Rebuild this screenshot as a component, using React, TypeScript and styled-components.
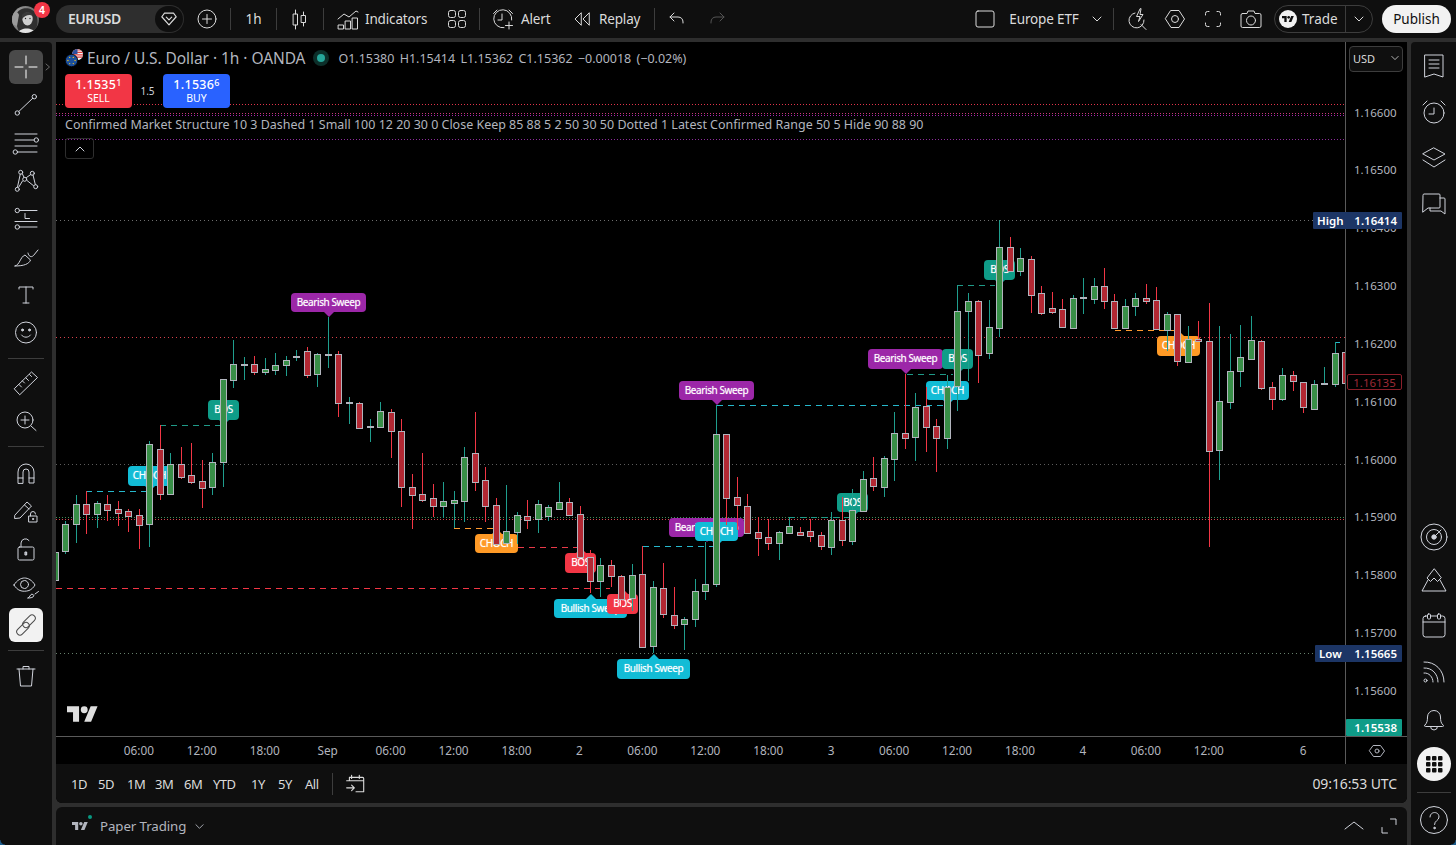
import React from 'react';
import styled, { createGlobalStyle } from 'styled-components';

const UI = '"Noto Sans", "Open Sans", sans-serif';

const Global = createGlobalStyle`
  html, body { margin: 0; padding: 0; background: #2e2e2e; width: 1456px; height: 845px; overflow: hidden; }
  body { font-family: ${UI}; color: #dbdbdb; }
  * { box-sizing: border-box; }
`;

const Page = styled.div`
  width: 1456px; height: 845px; display: flex; flex-direction: column; gap: 4px; background: #2e2e2e; overflow: hidden;
`;

/* ---------- top bar ---------- */
const TopBar = styled.header`
  height: 38px; flex: none; display: flex; align-items: center; background: #0f0f0f;
`;
const Slot = styled.div<{ $w: number; $pl?: number; $gap?: number }>`
  width: ${p => p.$w}px; flex: none; height: 100%; display: flex; align-items: center; justify-content: ${p => (p.$pl !== undefined ? 'flex-start' : 'center')};
  padding-left: ${p => p.$pl ?? 0}px; gap: ${p => p.$gap ?? 8}px;
  font-size: 13.5px; letter-spacing: -0.15px; color: #dbdbdb; white-space: nowrap;
`;
const BarText = styled.span`
  margin-bottom: 1px;
`;
const Dim = styled.span`
  color: #555; display: flex;
`;
const VSep = styled.div`
  width: 1px; height: 22px; background: #3d3d3d; flex: none;
`;
const Spacer = styled.div` flex: 1; `;
const AvatarWrap = styled.div`
  width: 56px; height: 38px; flex: none; position: relative;
  svg { position: absolute; left: 12px; top: 6px; }
`;
const Badge = styled.span`
  position: absolute; left: 34px; top: 2px; width: 16px; height: 16px; border-radius: 50%; background: #f23645; color: #fff;
  font-size: 10.5px; font-weight: 700; display: flex; align-items: center; justify-content: center; font-family: "Liberation Sans", sans-serif;
`;
const SymbolPill = styled.div`
  width: 128px; height: 28px; flex: none; border-radius: 14px; background: #2e2e2e; display: flex; align-items: center;
  justify-content: space-between; padding: 0 1px 0 12px; font-size: 14px; font-weight: 600; color: #dbdbdb; letter-spacing: -0.5px;
`;
const PillIcon = styled.span`
  width: 28px; height: 26px; border-radius: 13px; background: #0f0f0f; display: flex; align-items: center; justify-content: center;
`;
const TradeGroup = styled.div`
  width: 99px; height: 28px; flex: none; border: 1px solid #3d3d3d; border-radius: 14px; display: flex; align-items: center; font-size: 13.5px; color: #dbdbdb;
`;
const TradeMain = styled.div`
  width: 71px; height: 100%; display: flex; align-items: center; gap: 5px; padding-left: 4px; border-right: 1px solid #3d3d3d;
`;
const TradeLogo = styled.span`
  width: 18px; height: 18px; border-radius: 50%; background: #f2f2f2; display: flex; align-items: center; justify-content: center; flex: none;
`;
const TradeChevron = styled.div`
  flex: 1; display: flex; align-items: center; justify-content: center;
`;
const Publish = styled.button`
  width: 69px; height: 28px; flex: none; margin: 0 5px 0 9px; border: 0; padding: 0 0 1px; border-radius: 14px; background: #f2f2f2; color: #0f0f0f;
  font-family: ${UI}; font-size: 13.5px;
`;

/* ---------- workspace ---------- */
const Workspace = styled.div`
  flex: 1; display: flex; gap: 4px; min-height: 0;
`;
const LeftRail = styled.nav`
  width: 52px; flex: none; background: #0f0f0f; padding-top: 8px; border-top-right-radius: 4px; position: relative;
  display: flex; flex-direction: column; align-items: center;
`;
const CornerGlow = styled.span<{ $right?: boolean }>`
  position: absolute; bottom: 0; ${p => (p.$right ? 'right: 0;' : 'left: 0;')} width: 5px; height: 5px;
  background: radial-gradient(circle at ${p => (p.$right ? '0 0' : '100% 0')}, transparent 4px, #1c5c8c 5px);
`;
const ToolBtn = styled.button<{ $kind?: 'hover' | 'active' }>`
  width: 34px; height: 34px; flex: none; margin-bottom: 4px; padding: 0; border: 0; border-radius: 6px; display: flex; align-items: center; justify-content: center; position: relative;
  background: ${p => (p.$kind === 'hover' ? '#4a4a4a' : p.$kind === 'active' ? '#f2f2f2' : 'transparent')};
  color: ${p => (p.$kind === 'hover' ? '#ffffff' : p.$kind === 'active' ? '#4a4a4a' : '#d1d4dc')};
`;
const HoverCaret = styled.span`
  position: absolute; left: 35px; top: 13px; color: #6a6a6a; display: flex;
`;
const RailSep = styled.div<{ $after?: number }>`
  width: 36px; height: 1px; flex: none; background: #3d3d3d; margin: 4px 0 ${p => p.$after ?? 7}px;
`;
const Center = styled.main`
  width: 1351px; flex: none; display: flex; flex-direction: column; gap: 4px;
`;
const ChartPanel = styled.section`
  height: 761px; flex: none; display: flex; flex-direction: column; background: #000; border-radius: 0 0 6px 6px; overflow: hidden;
`;
const ChartRow = styled.div`
  height: 694px; flex: none; display: flex; position: relative;
`;
const Canvas = styled.div`
  width: 1289px; flex: none; position: relative; overflow: hidden; background: #000;
`;
const Layer = styled.svg`
  position: absolute; left: 0; top: 0; display: block;
`;
const Pill = styled.div<{ $x: number; $y: number; $w: number; $h: number; $c: string; $dir: 'up' | 'down' }>`
  position: absolute; left: ${p => p.$x - 56}px; top: ${p => p.$y - 42}px; width: ${p => p.$w}px; height: ${p => p.$h}px; background: ${p => p.$c};
  border-radius: 4px; color: #fff; font-size: 10px; line-height: 1; padding-bottom: 2px; display: flex; align-items: center; justify-content: center; white-space: nowrap; letter-spacing: -0.4px;
  text-shadow: 0 0 1px rgba(255, 255, 255, 0.6);
  &::after {
    content: ''; position: absolute; left: 50%; margin-left: -5px; border-left: 5px solid transparent; border-right: 5px solid transparent;
    ${p => (p.$dir === 'down' ? `top: 100%; border-top: 5px solid ${p.$c};` : `bottom: 100%; border-bottom: 5px solid ${p.$c};`)}
  }
`;
const Legend = styled.div`
  position: absolute; left: 9px; top: 5px; display: flex; flex-direction: column; align-items: flex-start;
`;
const TitleRow = styled.div`
  height: 22px; display: flex; align-items: center; color: #b2b5be; white-space: nowrap;
`;
const SymbolTitle = styled.span`
  font-size: 15.5px; margin-left: 4px; letter-spacing: -0.1px; word-spacing: 0.15px;
`;
const LiveDot = styled.span`
  width: 16px; height: 16px; border-radius: 50%; background: #0c2f2a; margin: 0 9px 0 8px; display: flex; align-items: center; justify-content: center;
  &::after { content: ''; width: 8px; height: 8px; border-radius: 50%; background: #26a69a; }
`;
const Ohlc = styled.span`
  font-size: 12.5px; word-spacing: 2px;
`;
const OrderRow = styled.div`
  margin-top: 5px; display: flex; align-items: center;
`;
const OrderBtn = styled.div<{ $c: string }>`
  width: 67px; height: 34px; border-radius: 4px; background: ${p => p.$c}; color: #fff; display: flex; flex-direction: column; align-items: center; justify-content: center; padding-bottom: 1px;
`;
const OrderPrice = styled.span`
  font-size: 12.5px; line-height: 15px; letter-spacing: 0.3px; font-weight: 500;
  sup { font-size: 9px; line-height: 0; vertical-align: 3px; }
`;
const OrderSide = styled.span`
  font-size: 10.5px; line-height: 13px;
`;
const Spread = styled.span`
  width: 31px; text-align: center; font-size: 10px; color: #d1d4dc;
`;
const IndicatorLine = styled.div`
  margin-top: 7px; height: 18px; display: flex; align-items: center; font-size: 12.47px; color: #b2b5be; white-space: nowrap;
`;
const CollapseBtn = styled.div`
  margin-top: 5px; width: 29px; height: 21px; border: 1px solid #2e2e2e; border-radius: 3px; display: flex; align-items: center; justify-content: center; color: #d1d4dc;
`;
const WaterMark = styled.svg`
  position: absolute; left: 11px; top: 664px; fill: #dedede;
`;
const PriceAxis = styled.div`
  width: 62px; flex: none; border-left: 1px solid #5a5a5a; position: relative; padding: 41.1px 0 0 8px; display: flex; flex-direction: column;
`;
const Tick = styled.div`
  height: 57.85px; flex: none; display: flex; align-items: center; font-size: 11.5px; color: #b2b5be;
`;
const Currency = styled.div`
  position: absolute; left: 3px; top: 4px; width: 54px; height: 26px; border: 1px solid #3d3d3d; border-radius: 4px; background: #0f0f0f; color: #dbdbdb;
  display: flex; align-items: center; justify-content: space-between; padding: 0 3px 2px 3px; font-size: 11px;
`;
const PriceTag = styled.div<{ $left: number; $top: number; $c: string }>`
  position: absolute; left: ${p => p.$left}px; right: 5px; top: ${p => p.$top}px; height: 17px; background: ${p => p.$c}; color: #fff; border-radius: 1px;
  display: flex; align-items: center; justify-content: space-between; padding: 0 5px 1px 4px; font-size: 11.5px; font-weight: 600;
`;
const LastPrice = styled.div`
  position: absolute; left: 1px; top: 332px; width: 55px; height: 16px; border: 1px solid #8a1f2a; border-radius: 2px; color: #9e2a35; background: #000;
  display: flex; align-items: center; justify-content: center; font-size: 11.5px;
`;
const TimeAxis = styled.div`
  height: 28px; flex: none; display: flex; border-top: 1px solid #5a5a5a; background: #000;
`;
const TimeLabels = styled.div`
  width: 1289px; flex: none; display: flex; padding: 0 0 2px 51.4px; align-items: center;
`;
const TimeLabel = styled.span<{ $w?: number }>`
  width: ${p => p.$w ?? 62.95}px; flex: none; text-align: center; font-size: 11.8px; color: #b2b5be;
`;
const AxisCorner = styled.div`
  flex: 1; border-left: 1px solid #5a5a5a; display: flex; align-items: center; justify-content: center; color: #b2b5be;
`;
const RangeBar = styled.div`
  flex: 1; background: #0f0f0f; display: flex; align-items: center; padding: 0 10px 0 15px; font-size: 13px; color: #dbdbdb;
`;
const RangeBtn = styled.span<{ $w: number }>`
  width: ${p => p.$w}px; flex: none; letter-spacing: -0.5px;
`;
const RangeSep = styled.div`
  width: 1px; height: 22px; background: #3d3d3d; margin: 0 12px 0 0;
`;
const Clock = styled.span`
  margin-left: auto; font-size: 14px; letter-spacing: -0.1px;
`;
const BottomPanel = styled.section`
  flex: 1; background: #0f0f0f; border-radius: 6px 6px 0 0; display: flex; align-items: center; padding-left: 16px; font-size: 13.3px; color: #b2b5be;
`;
const PaperLogo = styled.span`
  position: relative; display: flex; width: 28px; margin-right: 0;
  svg { fill: #b2b5be; }
  &::after { content: ''; position: absolute; left: 16px; top: -7px; width: 4px; height: 4px; border-radius: 50%; background: #089981; }
`;
const PaperName = styled.span` margin-right: 9px; letter-spacing: -0.1px; `;
const PanelTools = styled.div`
  margin-left: auto; display: flex; align-items: center; gap: 17px; padding-right: 10px; color: #d1d4dc;
`;
const RightRail = styled.aside`
  width: 45px; flex: none; background: #0f0f0f; display: flex; flex-direction: column; align-items: center; padding: 1px 0 2px; position: relative; border-top-left-radius: 4px;
`;
const RailBtn = styled.div<{ $mb?: number }>`
  width: 45px; height: 46px; flex: none; display: flex; align-items: center; justify-content: center; color: #d1d4dc; margin-bottom: ${p => p.$mb ?? 0}px;
`;
const RailGap = styled.div` flex: 1; `;
const AppsBtn = styled.div`
  width: 34px; height: 34px; border-radius: 50%; background: #f2f2f2; display: flex; align-items: center; justify-content: center;
`;
const RailLine = styled.div`
  width: 34px; height: 1px; flex: none; background: #3d3d3d; margin: 5px 0 4px;
`;

/* ---------- icons ---------- */
const Glyph = styled.svg`
  display: block; flex: none; fill: none; stroke: currentColor; stroke-width: 1; stroke-linecap: round; stroke-linejoin: round;
`;
const Ico = ({ s = 28, box = 28, children }: { s?: number; box?: number; children: React.ReactNode }) => (
  <Glyph width={s} height={s} viewBox={`0 0 ${box} ${box}`}>{children}</Glyph>
);
const TvMark = ({ w, fill }: { w: number; fill?: string }) => (
  <svg width={w} height={(w * 18) / 36} viewBox="0 4 36 18" fill={fill} style={{ display: 'block', flex: 'none' }}>
    <path d="M14 22H7V11H0V4h14v18zM28 22h-8l7.5-18h8L28 22z" />
    <circle cx="20" cy="8" r="4" />
  </svg>
);
const Chevron = ({ s = 10, up }: { s?: number; up?: boolean }) => (
  <Ico s={s} box={10}><path d={up ? 'M1 7l4-4 4 4' : 'M1 3l4 4 4-4'} /></Ico>
);

const Avatar = () => (
  <svg width="27" height="27" viewBox="0 0 27 27">
    <defs>
      <clipPath id="av"><circle cx="13.5" cy="13.5" r="13.5" /></clipPath>
      <radialGradient id="avbg" cx="0.3" cy="0.4" r="0.8"><stop offset="0" stopColor="#b5b5b5" /><stop offset="1" stopColor="#555" /></radialGradient>
    </defs>
    <g clipPath="url(#av)">
      <rect width="27" height="27" fill="url(#avbg)" />
      <path d="M5 7 C8 1 20 0 24 8 C27 15 25 24 21 27 H8 C5 23 3 14 5 7Z" fill="#2f2f2f" />
      <ellipse cx="15.500" cy="13" rx="5.200" ry="6.500" fill="#cfcfcf" />
      <path d="M10 9 C13 5 19 5 21 10 C18 8 13 9 10 13Z" fill="#3a3a3a" />
      <path d="M6 27 C8 21 21 21 24 27Z" fill="#e2e2e2" />
      <path d="M0 9 C3 5 6 6 7 9 L5 20 L0 18Z" fill="#9c9c9c" />
      <circle cx="13.500" cy="12.500" r="0.700" fill="#222" /><circle cx="18" cy="12.500" r="0.700" fill="#222" />
    </g>
  </svg>
);
const Flags = () => (
  <svg width="18" height="18" viewBox="0 0 18 18">
    <defs><clipPath id="us"><circle cx="12.5" cy="5.5" r="5.5" /></clipPath></defs>
    <g clipPath="url(#us)">
      <rect x="7" width="11" height="11" fill="#f5f5f5" />
      <path d="M7 1h11M7 3.4h11M7 5.8h11M7 8.2h11" stroke="#e03c3c" strokeWidth="1.2" />
      <rect x="7" y="0" width="5.5" height="5" fill="#2c4f9e" />
    </g>
    <circle cx="6.5" cy="11.5" r="6.2" fill="#1b4f9c" stroke="#000" strokeWidth="0.8" />
    {[0, 60, 120, 180, 240, 300].map(a => (
      <circle key={a} cx={6.5 + 3.6 * Math.cos((a * Math.PI) / 180)} cy={11.5 + 3.6 * Math.sin((a * Math.PI) / 180)} r="0.7" fill="#f5c518" />
    ))}
  </svg>
);

/* ---------- data ---------- */
type C = [number, number, number, number, number];
const candles: C[] = [
  [550,552,580,590,1],[521,524,551,554,1],[495,504,524,543,1],[491,504,514,534,0],[501,503,514,528,1],[495,504,510,521,0],[501,509,513,526,0],[509,511,516,532,0],
  [509,515,525,549,0],[441,444,524,547,1],[425,449,494,500,0],[453,464,494,494,1],[447,464,477,479,0],[443,475,482,484,0],[460,481,488,508,0],[453,462,487,495,1],
  [379,379,462,487,1],[340,364,380,388,1],[357,364,365,380,1],[356,364,372,375,0],[358,369,372,375,1],[353,365,370,375,1],[356,360,365,376,1],[350,356,357,361,1],
  [347,351,375,378,0],[353,354,374,387,1],[317,354,354,368,1],[351,354,403,417,0],[397,402,402,424,1],[402,403,428,428,0],[419,426,426,442,1],[402,411,427,427,1],
  [409,412,431,458,0],[419,431,487,507,0],[474,487,495,529,0],[453,494,500,502,0],[484,498,506,517,0],[482,501,506,518,1],[491,500,503,528,1],[447,457,501,522,1],
  [412,453,482,491,0],[467,480,506,522,0],[498,505,544,544,0],[485,531,543,544,1],[512,515,532,544,1],[500,516,520,529,0],[500,504,519,533,1],[505,507,516,521,1],
  [482,502,509,509,1],[498,502,515,515,0],[506,514,557,557,0],[550,557,581,593,0],[558,565,581,597,1],[560,565,576,587,0],[575,576,599,610,0],[564,575,598,611,1],
  [546,574,647,647,0],[581,587,646,653,1],[563,588,614,618,0],[587,615,625,629,0],[617,619,624,650,1],[579,591,619,627,1],[542,584,591,600,1],[405,434,584,587,1],
  [434,434,498,525,0],[477,497,505,530,0],[494,506,533,533,0],[517,532,538,556,0],[519,537,543,550,0],[531,532,543,560,1],[517,526,533,534,1],[527,532,535,535,0],
  [519,531,536,542,0],[532,535,546,550,0],[512,520,547,555,1],[497,520,540,546,0],[489,510,541,545,1],[471,479,511,511,1],[457,478,486,491,0],[456,458,487,497,1],
  [412,433,459,481,1],[374,433,438,449,0],[393,407,437,461,1],[387,406,427,452,0],[419,426,438,472,0],[375,387,438,449,1],[285,311,386,411,1],[293,301,311,381,1],
  [300,301,355,383,0],[300,327,353,359,1],[220,247,328,337,1],[237,247,271,271,0],[248,258,271,276,1],[256,259,295,313,0],[286,293,313,315,0],[292,308,312,314,0],
  [299,309,327,327,0],[295,298,328,328,1],[278,297,297,314,1],[278,286,299,304,1],[268,286,301,309,0],[294,301,328,328,0],[299,306,328,328,1],[293,298,306,316,1],
  [284,298,301,304,0],[287,300,329,329,0],[312,314,330,351,1],[314,314,361,366,0],[326,339,362,363,1],[321,339,341,342,0],[303,341,451,547,0],[326,401,450,480,1],
  [334,371,402,409,1],[325,357,371,387,1],[316,340,359,359,1],[340,341,388,390,0],[382,387,399,410,0],[368,375,399,401,1],[371,375,381,391,0],[382,382,407,413,0],
  [380,384,409,409,1],[367,383,384,385,1],[342,353,384,387,1],[345,352,383,384,0],
];

type Dot = [number, string, string];
const dotted: Dot[] = [
  [104.5, '#e0344a', '1 2'], [113.5, '#c83a7a', '1 2'], [115.5, '#a22ab0', '1 2'], [139.5, '#8e2a9c', '1 2'],
  [220.5, '#6f6f6f', '1 3'], [337.5, '#d8414c', '1 3'], [464.5, '#5c5c5c', '1 3'], [517.5, '#3e8f58', '1 2'], [519.5, '#d8414c', '1 2'], [653.5, '#66806c', '1 3'],
];
type Dash = [number, number, number, string];
const dashed: Dash[] = [
  [86, 147, 491.5, '#26b8cc'], [160, 221, 425.5, '#1f9a88'], [454, 493, 528.5, '#ff9a2e'], [518, 577, 547.5, '#e83a49'], [56, 610, 588.5, '#f23645'],
  [643, 713, 546.5, '#26b8cc'], [717, 943, 405.5, '#26b8cc'], [907, 953, 374.5, '#1f9a88'], [957, 995, 285.5, '#1f9a88'], [789, 850, 517.5, '#1f9a88'],
  [1115, 1175, 330.5, '#ff9a2e'], [1335, 1340, 342.5, '#26b8cc'],
];
const PURPLE = '#9c27a8', TEAL = '#0f9c88', CYAN = '#12bcd6', ORANGE = '#ff9a26', RED = '#f23645';
type Lbl = [string, number, number, number, number, string, 'up' | 'down'];
const labels: Lbl[] = [
  ['Bearish Sweep', 291, 293, 75, 19, PURPLE, 'down'],
  ['BOS', 208, 400, 31, 20, TEAL, 'down'],
  ['CHOCH', 128, 466, 43, 20, CYAN, 'down'],
  ['Bearish Sweep', 679, 381, 75, 19, PURPLE, 'down'],
  ['CHOCH', 475, 534, 43, 19, ORANGE, 'up'],
  ['BOS', 565, 553, 31, 20, RED, 'up'],
  ['Bullish Sweep', 554, 599, 73, 19, CYAN, 'up'],
  ['BOS', 607, 594, 31, 20, RED, 'up'],
  ['Bullish Sweep', 617, 659, 73, 20, CYAN, 'up'],
  ['Bearish Sweep', 669, 518, 75, 19, PURPLE, 'down'],
  ['CHOCH', 695, 522, 43, 19, CYAN, 'down'],
  ['Bearish Sweep', 868, 349, 75, 20, PURPLE, 'down'],
  ['BOS', 942, 349, 31, 20, TEAL, 'down'],
  ['CHOCH', 926, 381, 43, 19, CYAN, 'down'],
  ['BOS', 984, 260, 31, 20, TEAL, 'down'],
  ['BOS', 837, 493, 31, 19, TEAL, 'down'],
  ['CHOCH', 1157, 336, 43, 20, ORANGE, 'up'],
];
const ticks = ['1.16600','1.16500','1.16400','1.16300','1.16200','1.16100','1.16000','1.15900','1.15800','1.15700','1.15600'];
const times = ['06:00','12:00','18:00','Sep','06:00','12:00','18:00','2','06:00','12:00','18:00','3','06:00','12:00','18:00','4','06:00','12:00'];
const ranges: [string, number][] = [['1D',27],['5D',29],['1M',28],['3M',29],['6M',29],['YTD',38],['1Y',27],['5Y',27],['All',27]];

const CandleX = (i: number) => Math.round(55 + 10.49 * i) + 0.5;

const ChartGrid = () => (
  <Layer width={1289} height={694} viewBox="56 42 1289 694" shapeRendering="crispEdges">
    {dotted.map(([y, c, d]) => <line key={y} x1={56} x2={1345} y1={y} y2={y} stroke={c} strokeDasharray={d} />)}
    {dashed.map(([a, b, y, c]) => <line key={a + '-' + y} x1={a} x2={b} y1={y} y2={y} stroke={c} strokeDasharray="6 5" />)}
  </Layer>
);
const Candles = () => (
  <Layer width={1289} height={694} viewBox="56 42 1289 694" shapeRendering="crispEdges">
    {candles.map(([wt, bt, bb, wb, up], i) => {
      const x = CandleX(i);
      return (
        <g key={i}>
          <line x1={x} x2={x} y1={wt} y2={wb} stroke={up ? '#1f9e8e' : '#f23645'} />
          <rect x={x - 3} y={bt + 0.5} width={6} height={Math.max(bb - bt, 1)} fill={up ? '#388e47' : '#b22833'} stroke="#b2b5be" />
        </g>
      );
    })}
  </Layer>
);

const App = () => (
  <Page>
    <Global />
    <TopBar>
      <AvatarWrap><Avatar /><Badge>4</Badge></AvatarWrap>
      <SymbolPill>
        <BarText>EURUSD</BarText>
        <PillIcon>
          <Ico s={18} box={20}><path d="M5 3.5h10l3 4-8 9-8-9z" strokeWidth="1.3" /><path d="M7 8l3 3 3-3" strokeWidth="1.3" /></Ico>
        </PillIcon>
      </SymbolPill>
      <Slot $w={46}><Ico s={20} box={20}><circle cx="10" cy="10" r="9" /><path d="M10 5.5v9M5.5 10h9" /></Ico></Slot>
      <VSep />
      <Slot $w={45}><BarText>1h</BarText></Slot>
      <VSep />
      <Slot $w={46}><Ico><rect x="7.5" y="9" width="4" height="11" /><path d="M9.5 5v4M9.5 20v4" /><rect x="15.5" y="10.5" width="4" height="7" /><path d="M17.5 7v3.5M17.5 17.5V21" /></Ico></Slot>
      <VSep />
      <Slot $w={111} $pl={10} $gap={3}>
        <Ico><path d="M4 14l6-5 5 3 7-6 2 1" /><rect x="4.5" y="20" width="5" height="4" /><rect x="11.5" y="16" width="5" height="8" /><rect x="18.5" y="13" width="5" height="11" /></Ico>
        <BarText>Indicators</BarText>
      </Slot>
      <Slot $w={44}><Ico s={20} box={20}><rect x="1.5" y="1.5" width="7" height="7" rx="2" /><rect x="11.5" y="1.5" width="7" height="7" rx="2" /><rect x="1.5" y="11.5" width="7" height="7" rx="2" /><rect x="11.5" y="11.5" width="7" height="7" rx="2" /></Ico></Slot>
      <VSep />
      <Slot $w={83} $pl={11} $gap={6}>
        <Ico s={24} box={24}><path d="M13 20.7A9 9 0 1 1 20.7 13" /><path d="M11 7v6H7" /><path d="M18 15v7M14.5 18.5h7" /><path d="M2.5 6.5L6 3M21.5 6.5L18 3" /></Ico>
        <BarText>Alert</BarText>
      </Slot>
      <Slot $w={91} $pl={9} $gap={7}>
        <Ico s={20} box={20}><path d="M9 4L3 10l6 6zM17 4l-6 6 6 6z" /></Ico>
        <BarText>Replay</BarText>
      </Slot>
      <VSep />
      <Slot $w={44}><Ico s={18} box={18}><path d="M6 3L2 7l4 4M2 7h8c3 0 5 2 5 5v1" /></Ico></Slot>
      <Slot $w={36}><Dim><Ico s={18} box={18}><path d="M12 3l4 4-4 4M16 7H8c-3 0-5 2-5 5v1" /></Ico></Dim></Slot>
      <Spacer />
      <Slot $w={21}><Ico s={20} box={20}><rect x="1" y="2" width="18" height="16" rx="2" /></Ico></Slot>
      <Slot $w={5} />
      <Slot $w={88}><BarText>Europe ETF</BarText></Slot>
      <Slot $w={18}><Chevron /></Slot>
      <Slot $w={7} />
      <VSep />
      <Slot $w={9} />
      <Slot $w={28}><Ico s={22} box={22}><path d="M9 5a7.5 7.5 0 1 0 9 7" /><path d="M15 16.5l5 5" /><path d="M14 1L10.5 8.5H14l-1.5 5L17 6.5h-3l1-5.5z" /></Ico></Slot>
      <Slot $w={48}><Ico s={22} box={22}><path d="M7 2.5h8l5.5 8.5L15 19.5H7L1.500 11z" /><circle cx="11" cy="11" r="3.5" /></Ico></Slot>
      <Slot $w={28}><Ico s={18} box={18}><path d="M5 1.500H3.500a2 2 0 0 0-2 2V5M13 1.500h1.500a2 2 0 0 1 2 2V5M1.500 13v1.500a2 2 0 0 0 2 2H5M16.500 13v1.500a2 2 0 0 1-2 2H13" /></Ico></Slot>
      <Slot $w={47}><Ico s={22} box={22}><path d="M2.500 5.500H7l1-2.500h6l1 2.500h4.500a1.500 1.500 0 0 1 1.500 1.500v11a1.500 1.500 0 0 1-1.500 1.500h-17A1.500 1.500 0 0 1 1 18V7a1.500 1.500 0 0 1 1.500-1.500z" /><circle cx="11" cy="12.500" r="4.500" /></Ico></Slot>
      <TradeGroup>
        <TradeMain>
          <TradeLogo><TvMark w={12} fill="#0f0f0f" /></TradeLogo>
          <BarText>Trade</BarText>
        </TradeMain>
        <TradeChevron><Chevron /></TradeChevron>
      </TradeGroup>
      <Publish>Publish</Publish>
    </TopBar>

    <Workspace>
      <LeftRail>
        <CornerGlow />
        <ToolBtn $kind="hover">
          <Ico><path d="M14 3v8M14 17v8M3 14h8M17 14h8" /></Ico>
          <HoverCaret><Ico s={8} box={8}><path d="M2 1l3.500 3L2 7" /></Ico></HoverCaret>
        </ToolBtn>
        <ToolBtn><Ico><path d="M6.800 20.500L20.800 7.200" /><circle cx="5.300" cy="22" r="2.200" /><circle cx="22.300" cy="5.700" r="2.200" /></Ico></ToolBtn>
        <ToolBtn><Ico><path d="M3 5h22M3 11h19M3 17h22M5.500 23H25" /><circle cx="24.300" cy="11" r="2.200" /><circle cx="3.300" cy="23" r="2.200" /></Ico></ToolBtn>
        <ToolBtn><Ico><path d="M5.500 20l2.800-13M10.300 6.700l1.800 3.800M14.500 10.500l4.300-3M21 8l2.300 9.500M21.500 18.700L15 13.500M10.500 14l-3.800 6.200" /><circle cx="8.700" cy="5.300" r="2" /><circle cx="20.300" cy="6.300" r="2" /><circle cx="5.300" cy="22.300" r="2" /><circle cx="12.700" cy="12.300" r="2" /><circle cx="23.700" cy="19.700" r="2" /></Ico></ToolBtn>
        <ToolBtn><Ico><path d="M7.500 5.500H25M3 16.500h22M7.500 22H25M13 8.500v5h4.500" /><circle cx="5.300" cy="5.500" r="2.200" /><circle cx="5.300" cy="22" r="2.200" /></Ico></ToolBtn>
        <ToolBtn><Ico><path d="M3 23C8 22 8 14 13 12l5.500 5C17 21 12 23 3 23z" /><path d="M16 10c.5 3 3 5 5.500 2.500L26 7" /></Ico></ToolBtn>
        <ToolBtn><Ico><path d="M14 6v16M11 22h6M7 8V6h14v2" /></Ico></ToolBtn>
        <ToolBtn><Ico><circle cx="14" cy="13.500" r="10.500" /><circle cx="10.500" cy="11" r="1" fill="currentColor" /><circle cx="17.500" cy="11" r="1" fill="currentColor" /><path d="M9.500 16c2 3 7 3 9 0" /></Ico></ToolBtn>
        <RailSep />
        <ToolBtn><Ico><path d="M2.500 19.500L19.500 3l6 5.500L8 25.500z" /><path d="M7 15.500l2.500 2.500M10.500 12l2 2M14 9l2.500 2.500M17.500 5.500l2 2" /></Ico></ToolBtn>
        <ToolBtn><Ico><circle cx="13" cy="13" r="8" /><path d="M19 19l5 4.500M13 9v8M9 13h8" /></Ico></ToolBtn>
        <RailSep $after={9} />
        <ToolBtn><Ico><path d="M6 24V13a8 8 0 0 1 16 0v11h-5V13a3 3 0 0 0-6 0v11z" /><path d="M6 19h5M17 19h5" /></Ico></ToolBtn>
        <ToolBtn><Ico><path d="M3 18L15 5l4.500 4L8 21l-5 .5z" /><path d="M12.500 8l4.500 4" /><rect x="17" y="19" width="8" height="6" /><path d="M18.500 19v-2a2.500 2.500 0 0 1 5 0" /><circle cx="21" cy="22" r=".6" fill="currentColor" /></Ico></ToolBtn>
        <ToolBtn><Ico><rect x="6" y="12" width="16" height="13" rx="1.500" /><path d="M9 12V8a4.500 4.500 0 0 1 8-2.500" /><rect x="13.300" y="17" width="1.400" height="3" fill="currentColor" /></Ico></ToolBtn>
        <ToolBtn><Ico><path d="M2 12c3-5 7-7 10.500-7S20 7 23 12c-1.500 2.500-3.500 4.500-6 5.500-3 1-6.500 1-9 0-2.500-1-4.500-3-6-5.500z" /><circle cx="12.500" cy="11.500" r="4" /><path d="M16 25c2-.5 2-3.500 4-4l2 1.500c-.5 2-3 2.500-6 2.500zM23 21l3.500-2.500" /></Ico></ToolBtn>
        <ToolBtn $kind="active"><Ico><rect x="3.500" y="14.500" width="15" height="6.500" rx="3.250" transform="rotate(-45 11 17.750)" /><rect x="9.500" y="7" width="15" height="6.500" rx="3.250" transform="rotate(-45 17 10.250)" /></Ico></ToolBtn>
        <RailSep />
        <ToolBtn><Ico><path d="M5 8h18M11 8V5.500h6V8M7 8l1.500 17h11L21 8" /></Ico></ToolBtn>
      </LeftRail>

      <Center>
        <ChartPanel>
          <ChartRow>
            <Canvas>
              <ChartGrid />
              {labels.map(([t, x, y, w, h, c, d]) => (
                <Pill key={t + x + y} $x={x} $y={y} $w={w} $h={h} $c={c} $dir={d}>{t}</Pill>
              ))}
              <Candles />
              <Legend>
                <TitleRow>
                  <Flags />
                  <SymbolTitle>Euro / U.S. Dollar · 1h · OANDA</SymbolTitle>
                  <LiveDot />
                  <Ohlc>O1.15380 H1.15414 L1.15362 C1.15362 −0.00018 (−0.02%)</Ohlc>
                </TitleRow>
                <OrderRow>
                  <OrderBtn $c="#f23645"><OrderPrice>1.1535<sup>1</sup></OrderPrice><OrderSide>SELL</OrderSide></OrderBtn>
                  <Spread>1.5</Spread>
                  <OrderBtn $c="#2962ff"><OrderPrice>1.1536<sup>6</sup></OrderPrice><OrderSide>BUY</OrderSide></OrderBtn>
                </OrderRow>
                <IndicatorLine>Confirmed Market Structure 10 3 Dashed 1 Small 100 12 20 30 0 Close Keep 85 88 5 2 50 30 50 Dotted 1 Latest Confirmed Range 50 5 Hide 90 88 90</IndicatorLine>
                <CollapseBtn><Chevron up /></CollapseBtn>
              </Legend>
              <WaterMark width="31" height="16" viewBox="0 4 36 18">
                <path d="M14 22H7V11H0V4h14v18zM28 22h-8l7.500-18h8L28 22z" /><circle cx="20" cy="8" r="4" />
              </WaterMark>
            </Canvas>
            <PriceAxis>
              {ticks.map(t => <Tick key={t}>{t}</Tick>)}
              <Currency>USD<Chevron s={8} /></Currency>
              <LastPrice>1.16135</LastPrice>
            </PriceAxis>
            <PriceTag $left={1257} $top={170} $c="#1c3565"><span>High</span><span>1.16414</span></PriceTag>
            <PriceTag $left={1259} $top={603} $c="#1c3565"><span>Low</span><span>1.15665</span></PriceTag>
            <PriceTag $left={1290} $top={677} $c="#0f9c88"><span /><span>1.15538</span></PriceTag>
          </ChartRow>
          <TimeAxis>
            <TimeLabels>
              {times.map((t, i) => <TimeLabel key={i}>{t}</TimeLabel>)}
              <TimeLabel $w={31.5} />
              <TimeLabel>6</TimeLabel>
            </TimeLabels>
            <AxisCorner><Ico s={18} box={18}><path d="M5.500 3.500h7l4 5.500-4 5.500h-7L1.500 9z" /><circle cx="9" cy="9" r="2" /></Ico></AxisCorner>
          </TimeAxis>
          <RangeBar>
            {ranges.map(([r, w]) => <RangeBtn key={r} $w={w}>{r}</RangeBtn>)}
            <RangeSep />
            <Ico s={22} box={20}><path d="M4 7V4h12a1 1 0 0 1 1 1v12H10M1.500 7H17M6 2v3M13 2v3M1.500 13.500h7M6 11l2.500 2.500L6 16" /></Ico>
            <Clock>09:16:53 UTC</Clock>
          </RangeBar>
        </ChartPanel>
        <BottomPanel>
          <PaperLogo><TvMark w={16} /></PaperLogo>
          <PaperName>Paper Trading</PaperName>
          <Chevron s={9} />
          <PanelTools>
            <Ico s={20} box={20}><path d="M1 13l9-7 9 7" /></Ico>
            <Ico s={16} box={16}><path d="M9.500 1H15v5.500M1 9.500V15h5.500" /></Ico>
          </PanelTools>
        </BottomPanel>
      </Center>

      <RightRail>
        <RailBtn><Ico><path d="M5 3h18v22l-9-3-9 3z" /><path d="M9 8h10M9 12h10M9 16h10" /></Ico></RailBtn>
        <RailBtn><Ico><circle cx="14" cy="15" r="10" /><path d="M14 10v6h-5M3 7l4-4M25 7l-4-4" /></Ico></RailBtn>
        <RailBtn><Ico><path d="M14 4l11 6-11 6L3 10z" /><path d="M3 16l11 7 11-7" /></Ico></RailBtn>
        <RailBtn><Ico><path d="M3 5a1 1 0 0 1 1-1h15a1 1 0 0 1 1 1v12a1 1 0 0 1-1 1H8l-5 4z" /><path d="M20 8h4a1 1 0 0 1 1 1v15l-4-3H10v-3" /></Ico></RailBtn>
        <RailGap />
        <RailBtn $mb={-3}><Ico><circle cx="14" cy="14" r="13" /><circle cx="14" cy="14" r="7.500" /><circle cx="14" cy="14" r="2.200" fill="currentColor" /><path d="M14 14l7-7" /></Ico></RailBtn>
        <RailBtn><Ico><path d="M14 3L7 12l3.500 3.500L14 12l3.500 3.500L21 12zM8 14L2 25h24l-6-11" /></Ico></RailBtn>
        <RailBtn><Ico><rect x="3" y="4" width="22" height="21" rx="2.500" /><path d="M3 10h22" /><rect x="7.500" y="2" width="3" height="5" rx="1" fill="#0f0f0f" /><rect x="17.500" y="2" width="3" height="5" rx="1" fill="#0f0f0f" /></Ico></RailBtn>
        <RailBtn><Ico><circle cx="5.500" cy="22.500" r="1.500" /><path d="M4 15c5-.5 9 4 9 9M4 10c8-.5 14 6 14 14M4 4c11-.5 20 8 20 20" /></Ico></RailBtn>
        <RailBtn><Ico><path d="M5 21c2-2 2.500-4 2.500-8a6.500 6.500 0 0 1 13 0c0 4 .5 6 2.500 8 1 1 .5 1.500-.5 1.500H5.500C4.500 22.500 4 22 5 21z" /><path d="M10.500 22.500a3.500 3.500 0 0 0 7 0" /></Ico></RailBtn>
        <RailBtn>
          <AppsBtn>
            <svg width="20" height="20" viewBox="0 0 20 20" fill="#0f0f0f">
              {[2, 8, 14].flatMap(y => [2, 8, 14].map(x => <rect key={x + '-' + y} x={x} y={y} width="4.500" height="4.500" rx="1" />))}
            </svg>
          </AppsBtn>
        </RailBtn>
        <RailLine />
        <RailBtn><Ico><circle cx="14" cy="14" r="13.500" /><path d="M10 11c0-6 9-6 9 0 0 3.500-4.500 3.500-4.500 7.500" /><circle cx="14.500" cy="22" r=".8" fill="currentColor" /></Ico></RailBtn>
        <CornerGlow $right />
      </RightRail>
    </Workspace>
  </Page>
);

export default App;
